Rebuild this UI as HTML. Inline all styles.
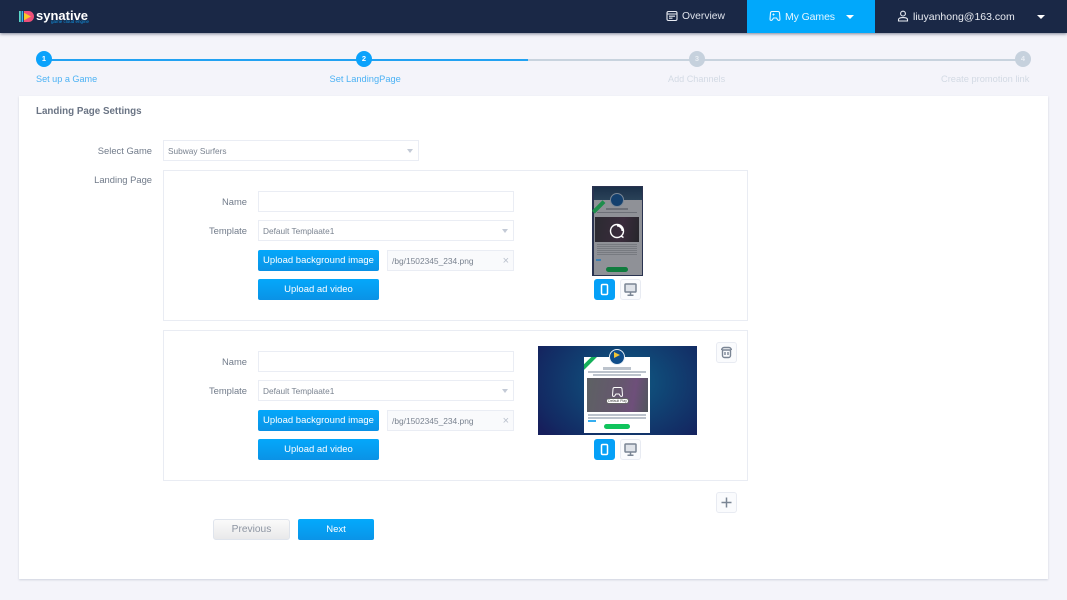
<!DOCTYPE html>
<html><head><meta charset="utf-8"><style>
*{box-sizing:border-box}
html,body{margin:0;padding:0}
body{width:1067px;height:600px;overflow:hidden;background:#f4f4fa;font-family:"Liberation Sans",sans-serif;position:relative;color:#5f6b7c}
.a{position:absolute}
.t{position:absolute;white-space:nowrap}
.lbl{position:absolute;white-space:nowrap;font-size:9.4px;color:#717b8a;text-align:right}
.box{position:absolute;background:#fff;border:1px solid #e9ecf3}
.input{position:absolute;background:#fff;border:1px solid #eaedf4;height:21px;font-size:8.3px;line-height:20px;padding-left:4px;color:#7a8390}
.arr{position:absolute;right:5px;top:8px;width:0;height:0;border-left:3.5px solid transparent;border-right:3.5px solid transparent;border-top:4px solid #c3cad6}
.btn{position:absolute;height:21px;width:121px;border-radius:2px;background:linear-gradient(#04a8fb,#0a92e6);color:#fff;font-size:9.5px;text-align:center;line-height:22px;white-space:nowrap}
.file{position:absolute;width:127px;height:21px;background:#f9fafc;border:1px solid #eaedf4;font-size:8.4px;line-height:20px;padding-left:4px;color:#7a8390}
.ico{position:absolute;width:21px;height:21px;border-radius:3px;background:#fafbfd;border:1px solid #e8ebf2}
.ico.on{background:#05a0f7;border-color:#05a0f7}
.ico svg{position:absolute;left:-1px;top:-1px}
.step{position:absolute;width:16px;height:16px;border-radius:50%;font-size:7.5px;text-align:center;line-height:16px;font-weight:bold;top:51px}
.sl{position:absolute;white-space:nowrap;top:74px;font-size:9.1px}
</style></head><body>

<!-- header -->
<div class="a" style="left:0;top:0;width:1067px;height:33px;background:#1a2846;box-shadow:0 1px 3px rgba(30,40,70,.55)"></div>
<div class="a" style="left:747px;top:0;width:128px;height:33px;background:#01a8fb"></div>
<svg class="a" style="left:18px;top:9px" width="17" height="15" viewBox="0 0 17 15">
<rect x="1" y="2" width="1.8" height="11" fill="#5ad6c8"/><rect x="3.6" y="2" width="1.6" height="11" fill="#36b4ee"/>
<path d="M6 2h4.500a5.500 5.500 0 0 1 0 11H6z" fill="#ee4f78"/><path d="M6 3.800l7 3.700-7 3.700z" fill="#f8c927"/></svg>
<div class="t" style="left:36px;top:8px;font-size:13px;font-weight:bold;color:#fff">synative</div>
<div class="t" style="left:51px;top:18.500px;font-size:4.500px;color:#0f92e0">game cloud engine</div>

<svg class="a" style="left:666px;top:10px" width="12" height="12" viewBox="0 0 12 12" fill="none" stroke="#e8ebf2" stroke-width="1.100"><rect x="1" y="1.500" width="10" height="9" rx="1.500"/><path d="M1 4h10M3 6.200h6M3 8.200h3.500"/></svg>
<div class="t" style="left:682px;top:10.500px;font-size:10.300px;color:#dfe3ec">Overview</div>

<svg class="a" style="left:769px;top:10px" width="12" height="12" viewBox="0 0 12 12" fill="none" stroke="#e6f6ff" stroke-width="1.100"><path d="M3 1.500h6a1.500 1.500 0 0 1 1.500 1.400l.5 6.300c0 1.300-1.500 1.600-2.300.6L7.500 8h-3L3.300 9.800c-.8 1-2.300.7-2.300-.6l.5-6.300A1.500 1.500 0 0 1 3 1.500z"/><path d="M3.500 4.500h2M4.500 3.500v2"/></svg>
<div class="t" style="left:785px;top:10.500px;font-size:10.500px;letter-spacing:-.1px;color:#e6f6ff">My Games</div>
<div class="a" style="left:846px;top:14.500px;border-left:4px solid transparent;border-right:4px solid transparent;border-top:4.500px solid #fff"></div>

<svg class="a" style="left:897px;top:10px" width="12" height="12" viewBox="0 0 12 12" fill="none" stroke="#e8ebf2" stroke-width="1.100"><circle cx="6" cy="3.600" r="2.400"/><path d="M1.500 11V9.600C1.500 8.300 3 7.600 6 7.600s4.500.7 4.500 2V11z"/></svg>
<div class="t" style="left:913px;top:10.500px;font-size:10.500px;color:#e8ebf2">liuyanhong@163.com</div>
<div class="a" style="left:1037px;top:14.500px;border-left:4px solid transparent;border-right:4px solid transparent;border-top:4.500px solid #fff"></div>

<!-- stepper -->
<div class="a" style="left:44px;top:58.500px;width:484px;height:2px;background:#22a2f2"></div>
<div class="a" style="left:528px;top:58.500px;width:495px;height:2px;background:#c8d3de"></div>
<div class="step" style="left:36px;background:#0ba2fb;color:#fff">1</div>
<div class="step" style="left:356px;background:#0ba2fb;color:#fff">2</div>
<div class="step" style="left:689px;background:#c6d1dd;color:#e8edf3">3</div>
<div class="step" style="left:1015px;background:#c6d1dd;color:#e8edf3">4</div>
<div class="sl" style="left:36px;color:#4cb2f4">Set up a Game</div>
<div class="sl" style="left:329.500px;color:#4cb2f4;font-size:9.300px">Set LandingPage</div>
<div class="sl" style="left:668px;color:#d3dae4">Add Channels</div>
<div class="sl" style="left:941px;color:#d3dae4;font-size:9.300px">Create promotion link</div>

<!-- card -->
<div class="a" style="left:19px;top:96px;width:1029px;height:483px;background:#fff;box-shadow:0 1px 2px rgba(150,160,180,.4)"></div>
<div class="t" style="left:36px;top:105.500px;font-size:9.800px;font-weight:bold;color:#6a7484">Landing Page Settings</div>

<div class="lbl" style="left:60px;width:92px;top:145px">Select Game</div>
<div class="input" style="left:163px;top:140px;width:256px">Subway Surfers<span class="arr"></span></div>
<div class="lbl" style="left:60px;width:92px;top:174px">Landing Page</div>

<!-- section 1 -->
<div class="box" style="left:163px;top:170px;width:585px;height:151px"></div>
<div class="lbl" style="left:190px;width:57px;top:195.500px">Name</div>
<div class="input" style="left:258px;top:191px;width:256px"></div>
<div class="lbl" style="left:190px;width:57px;top:225px">Template</div>
<div class="input" style="left:258px;top:220px;width:256px">Default Templaate1<span class="arr"></span></div>
<div class="btn" style="left:258px;top:250px">Upload background image</div>
<div class="file" style="left:387px;top:250px">/bg/1502345_234.png<span class="a" style="right:4px;top:0;font-size:11px;color:#b9c0cc">×</span></div>
<div class="btn" style="left:258px;top:279px">Upload ad video</div>

<!-- phone preview -->
<div class="a" style="left:592px;top:186px;width:51px;height:90px;background:#8f9197;overflow:hidden;border-bottom:1px solid #2a3350;border-top:1px solid #2a3350">
<div class="a" style="left:0;top:0;width:51px;height:13px;background:linear-gradient(#1b3049,#2a4258)"></div>
<div class="a" style="left:0;top:0;width:2px;height:90px;background:#2a3350"></div>
<div class="a" style="right:0;top:0;width:1px;height:90px;background:#2a3350"></div>
<div class="a" style="left:18px;top:6px;width:14px;height:14px;border-radius:50%;background:#14406e;border:1px solid #7a8796"></div>
<div class="a" style="left:-1px;top:18px;width:15px;height:3.500px;background:#1e8e4c;transform:rotate(-45deg)"></div>
<div class="a" style="left:14px;top:21px;width:22px;height:1.500px;background:#6d7078"></div>
<div class="a" style="left:5px;top:25px;width:40px;height:1px;background:#6d7078"></div>
<div class="a" style="left:3px;top:30px;width:44px;height:25px;background:linear-gradient(100deg,#2b2b31,#3a2b3c 60%,#26262b)"></div>
<div class="a" style="left:5px;top:57px;width:40px;height:11px;background:repeating-linear-gradient(#777a80 0 1px,#8f9197 1px 2px)"></div>
<div class="a" style="left:4px;top:72px;width:5px;height:1.500px;background:#3d7eb0"></div>
<div class="a" style="left:14px;top:80px;width:22px;height:5px;border-radius:3px;background:#107c3e"></div>
</div>
<svg class="a" style="left:608px;top:222px" width="18" height="18" viewBox="0 0 18 18" fill="none" stroke="#fff" stroke-width="1.400"><circle cx="9" cy="9" r="6.500"/><path d="M9 3.500a5.500 5.500 0 0 1 5.500 5.500" stroke-width="2"/><path d="M13 14l2.500 1.500"/></svg>
<div class="ico on" style="left:594px;top:279px"><svg width="21" height="21" viewBox="0 0 21 21" fill="none" stroke="#fff" stroke-width="1.500"><rect x="7.500" y="5.500" width="6" height="10" rx="1.200"/></svg></div>
<div class="ico" style="left:620px;top:279px"><svg width="21" height="21" viewBox="0 0 21 21" fill="none" stroke="#7a8594" stroke-width="1.500"><rect x="5" y="5" width="11" height="8" rx=".8" fill="#dfe3e9"/><path d="M10.500 13v3M7.500 16.200h6"/></svg></div>

<!-- section 2 -->
<div class="box" style="left:163px;top:330px;width:585px;height:151px"></div>
<div class="lbl" style="left:190px;width:57px;top:355.500px">Name</div>
<div class="input" style="left:258px;top:351px;width:256px"></div>
<div class="lbl" style="left:190px;width:57px;top:385px">Template</div>
<div class="input" style="left:258px;top:380px;width:256px">Default Templaate1<span class="arr"></span></div>
<div class="btn" style="left:258px;top:410px">Upload background image</div>
<div class="file" style="left:387px;top:410px">/bg/1502345_234.png<span class="a" style="right:4px;top:0;font-size:11px;color:#b9c0cc">×</span></div>
<div class="btn" style="left:258px;top:439px">Upload ad video</div>

<!-- desktop preview -->
<div class="a" style="left:538px;top:346px;width:159px;height:89px;background:radial-gradient(ellipse 65% 90% at 55% 40%,#0e5c84,#132a63 85%,#161f5c);overflow:hidden">
<div class="a" style="left:46px;top:11px;width:66px;height:76px;background:#fff;overflow:hidden">
<div class="a" style="left:-4px;top:3px;width:18px;height:3.500px;background:#15b05a;transform:rotate(-45deg)"></div>
</div>
<div class="a" style="left:71px;top:3px;width:16px;height:16px;border-radius:50%;background:#0f4d8a;border:1px solid #e6eef5"></div>
<div class="a" style="left:76px;top:6px;width:0;height:0;border-left:6px solid #f0c437;border-top:3px solid transparent;border-bottom:3px solid transparent"></div>
<div class="a" style="left:65px;top:21px;width:28px;height:3px;background:#bcc3cc"></div>
<div class="a" style="left:50px;top:25px;width:58px;height:1.500px;background:#bcc3cc"></div>
<div class="a" style="left:55px;top:28px;width:48px;height:1.500px;background:#bcc3cc"></div>
<div class="a" style="left:49px;top:32px;width:61px;height:34px;background:linear-gradient(100deg,#5d6163,#66566f 55%,#6e4f7a 75%,#50575c)"></div>
<svg class="a" style="left:73px;top:40px" width="13" height="12" viewBox="0 0 12 12" fill="none" stroke="#fff" stroke-width="1"><path d="M3 1.500h6a1.500 1.500 0 0 1 1.500 1.400l.5 6.300c0 1.300-1.500 1.600-2.300.6L7.500 8h-3L3.300 9.800c-.8 1-2.300.7-2.300-.6l.5-6.300A1.500 1.500 0 0 1 3 1.500z"/></svg>
<div class="a" style="left:68px;top:52px;width:23px;height:6px;border-radius:3px;background:#fff;border:1px solid #666;font-size:3.500px;line-height:4px;text-align:center;color:#444;white-space:nowrap">Default Play</div>
<div class="a" style="left:50px;top:68px;width:58px;height:1.500px;background:#bcc3cc"></div>
<div class="a" style="left:50px;top:71px;width:58px;height:1.500px;background:#bcc3cc"></div>
<div class="a" style="left:50px;top:74px;width:8px;height:1.500px;background:#35aef0"></div>
<div class="a" style="left:66px;top:78px;width:26px;height:5px;border-radius:3px;background:#10c45c"></div>
</div>
<div class="ico on" style="left:594px;top:439px"><svg width="21" height="21" viewBox="0 0 21 21" fill="none" stroke="#fff" stroke-width="1.500"><rect x="7.500" y="5.500" width="6" height="10" rx="1.200"/></svg></div>
<div class="ico" style="left:620px;top:439px"><svg width="21" height="21" viewBox="0 0 21 21" fill="none" stroke="#7a8594" stroke-width="1.500"><rect x="5" y="5" width="11" height="8" rx=".8" fill="#dfe3e9"/><path d="M10.500 13v3M7.500 16.200h6"/></svg></div>
<div class="ico" style="left:716px;top:342px"><svg width="21" height="21" viewBox="0 0 21 21" fill="none" stroke="#7a8594" stroke-width="1.400"><path d="M6.500 8h8v5.500a2 2 0 0 1-2 2h-4a2 2 0 0 1-2-2zM5.700 8c0-1.500 1-2.500 2.500-2.500h4.600c1.500 0 2.500 1 2.500 2.500M9 10v3M12 10v3"/></svg></div>
<div class="ico" style="left:716px;top:492px"><svg width="21" height="21" viewBox="0 0 21 21" fill="none" stroke="#7a8594" stroke-width="1.500"><path d="M10.500 5.500v10M5.500 10.500h10"/></svg></div>

<!-- actions -->
<div class="a" style="left:213px;top:519px;width:77px;height:21px;border-radius:3px;background:linear-gradient(#fafafa,#e9e9ea);border:1px solid #dfe4ec;color:#8d95a2;font-size:10.200px;text-align:center;line-height:20px">Previous</div>
<div class="a" style="left:298px;top:519px;width:76px;height:21px;border-radius:2px;background:linear-gradient(#03aafc,#0a94e8);color:#fff;font-size:9.500px;text-align:center;line-height:22px">Next</div>
</body></html>
